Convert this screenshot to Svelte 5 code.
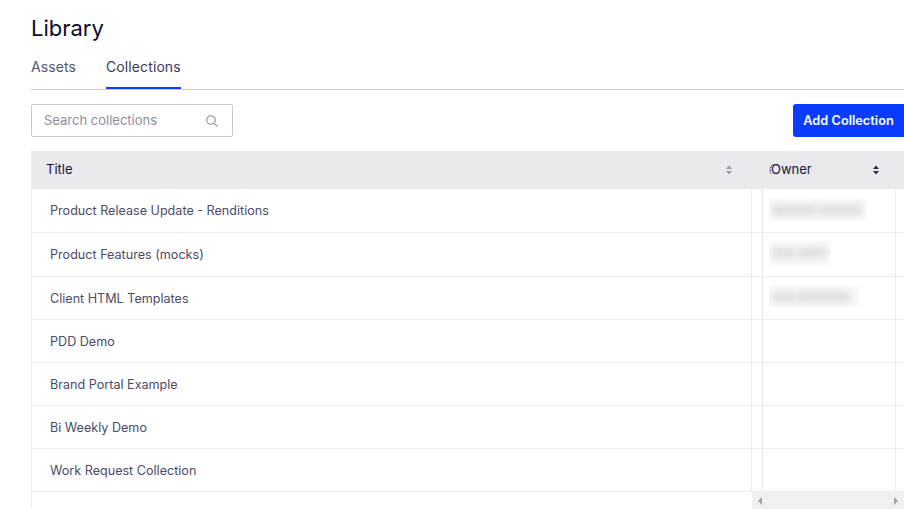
<script>
  const rows = [
    { title: 'Product Release Update - Renditions', blur: 97, h: 22, top: 10, segs: [44, 44] },
    { title: 'Product Features (mocks)', blur: 62, h: 24, top: 8, segs: [22, 30] },
    { title: 'Client HTML Templates', blur: 90, h: 21, top: 9, segs: [22, 54] },
    { title: 'PDD Demo' },
    { title: 'Brand Portal Example' },
    { title: 'Bi Weekly Demo' },
    { title: 'Work Request Collection' }
  ];
</script>

<main class="page">
  <h1>Library</h1>

  <nav class="tabs">
    <span class="tab">Assets</span>
    <span class="tab active">Collections</span>
  </nav>

  <div class="toolbar">
    <label class="search">
      <input type="text" placeholder="Search collections" />
      <svg width="14" height="14" viewBox="0 0 14 14" fill="none" stroke="#9a9aab" stroke-width="1.3">
        <circle cx="6" cy="6" r="4.2" />
        <path d="M9.2 9.2 L12.6 12.6" />
      </svg>
    </label>
    <button class="add">Add Collection</button>
  </div>

  <div class="table">
    <div class="head">
      <div class="th title">
        <span>Title</span>
        <svg class="sort" width="8" height="10" viewBox="0 0 8 10" fill="#9a9aab">
          <path d="M4 0.5 L7 4 H1 Z M4 9.5 L1 6 H7 Z" />
        </svg>
      </div>
      <div class="th owner">
        <span class="owner-label">
          <svg class="handle" width="4" height="10" viewBox="0 0 4 10" fill="none" stroke="#14143c" stroke-width="1" stroke-dasharray="1.5 1.2">
            <path d="M3.5 1 C1 2 0.5 7 2 9.5" />
          </svg>
          Owner
        </span>
        <svg class="sort" width="8" height="10" viewBox="0 0 8 10" fill="#2a2a45">
          <path d="M4 0.5 L7 4 H1 Z M4 9.5 L1 6 H7 Z" />
        </svg>
      </div>
    </div>

    {#each rows as row}
      <div class="row">
        <div class="cell title">{row.title}</div>
        <div class="cell spacer"></div>
        <div class="cell owner">
          {#if row.blur}
            <div class="blurred" style="width:{row.blur}px;height:{row.h}px;margin-top:{row.top}px">
              {#each row.segs as w}
                <i style="width:{w}px"></i>
              {/each}
            </div>
          {/if}
        </div>
        <div class="cell rest"></div>
      </div>
    {/each}

    <div class="bottom">
      <div class="left"></div>
      <div class="scrollbar">
        <svg width="6" height="8" viewBox="0 0 6 8" fill="#a3a3a3"><path d="M5 0 V8 L1 4 Z" /></svg>
        <svg width="6" height="8" viewBox="0 0 6 8" fill="#a3a3a3"><path d="M1 0 V8 L5 4 Z" /></svg>
      </div>
    </div>
  </div>
</main>

<style>
  :global(body) {
    background: #fff;
    overflow: hidden;
  }

  .page {
    width: 904px;
    height: 509px;
    overflow: hidden;
    box-sizing: border-box;
    padding: 14px 0 0 31px;
    font-family: Inter, "Liberation Sans", sans-serif;
    color: #14143c;
  }

  h1 {
    margin: 0;
    font-size: 22px;
    font-weight: 400;
    line-height: 28px;
    color: #0c0c30;
  }

  .tabs {
    display: flex;
    gap: 30px;
    margin-top: 11px;
    height: 36px;
    border-bottom: 1px solid #c9c9d2;
  }

  .tab {
    font-size: 14px;
    line-height: 28px;
    color: #55556e;
    letter-spacing: 0.1px;
    height: 36px;
    box-sizing: border-box;
  }

  .tab.active {
    color: #3a3a58;
    border-bottom: 2px solid #0a3cff;
  }

  .toolbar {
    display: flex;
    justify-content: space-between;
    margin-top: 14px;
  }

  .search {
    display: flex;
    align-items: center;
    width: 202px;
    height: 33px;
    box-sizing: border-box;
    border: 1px solid #c9c9d2;
    border-radius: 2px;
    padding: 0 13px 0 12px;
  }

  .search input {
    flex: 1;
    min-width: 0;
    border: 0;
    outline: 0;
    padding: 0 0 2px;
    font: 13px Inter, "Liberation Sans", sans-serif;
    background: none;
  }

  .search input::placeholder {
    color: #8d8da1;
    opacity: 1;
  }

  .add {
    width: 111px;
    height: 33px;
    border: 0;
    border-radius: 3px 0 0 3px;
    background: #0a3cff;
    color: #fff;
    font: 600 12.75px Inter, "Liberation Sans", sans-serif;
    padding: 0;
  }

  .table {
    margin-top: 14px;
    border-left: 1px solid #ececf0;
  }

  .head {
    display: flex;
    height: 38px;
    background: #e9e9ee;
    margin-left: -1px;
    font-size: 13px;
    color: #14143c;
  }

  .th {
    display: flex;
    align-items: center;
    justify-content: space-between;
  }

  .th span {
    margin-bottom: 2px;
  }

  .th.title {
    width: 687px;
    padding-left: 15px;
  }

  .th.owner {
    margin-left: 38px;
    width: 109px;
  }

  .owner-label {
    position: relative;
  }

  .handle {
    position: absolute;
    left: -2px;
    top: 3px;
  }

  .row {
    display: flex;
    height: 42px;
    border-bottom: 1px solid #ececf0;
  }

  .row:nth-child(2),
  .row:nth-child(3) {
    height: 43px;
  }

  .cell {
    font-size: 12.6px;
    color: #4b4b68;
    box-sizing: border-box;
  }

  .cell.title {
    width: 719px;
    padding-left: 18px;
    line-height: 44px;
  }

  .cell.spacer {
    width: 11px;
    border-left: 1px solid #ececf0;
  }

  .cell.owner {
    width: 133px;
    border-left: 1px solid #e6e6ea;
    padding-left: 6px;
  }

  .cell.rest {
    flex: 1;
    border-left: 1px solid #ececf0;
  }

  .blurred {
    background: #fafafb;
    display: flex;
    align-items: center;
    gap: 2px;
    padding-left: 3px;
    box-sizing: border-box;
    overflow: hidden;
  }

  .blurred i {
    display: block;
    height: 10px;
    background: #d9d9df;
    filter: blur(4.5px);
  }

  .bottom {
    display: flex;
    height: 18px;
  }

  .left {
    width: 720px;
  }

  .scrollbar {
    width: 152px;
    background: #f0f0f0;
    display: flex;
    align-items: center;
    justify-content: space-between;
    padding: 0 5px;
    box-sizing: border-box;
  }
</style>
